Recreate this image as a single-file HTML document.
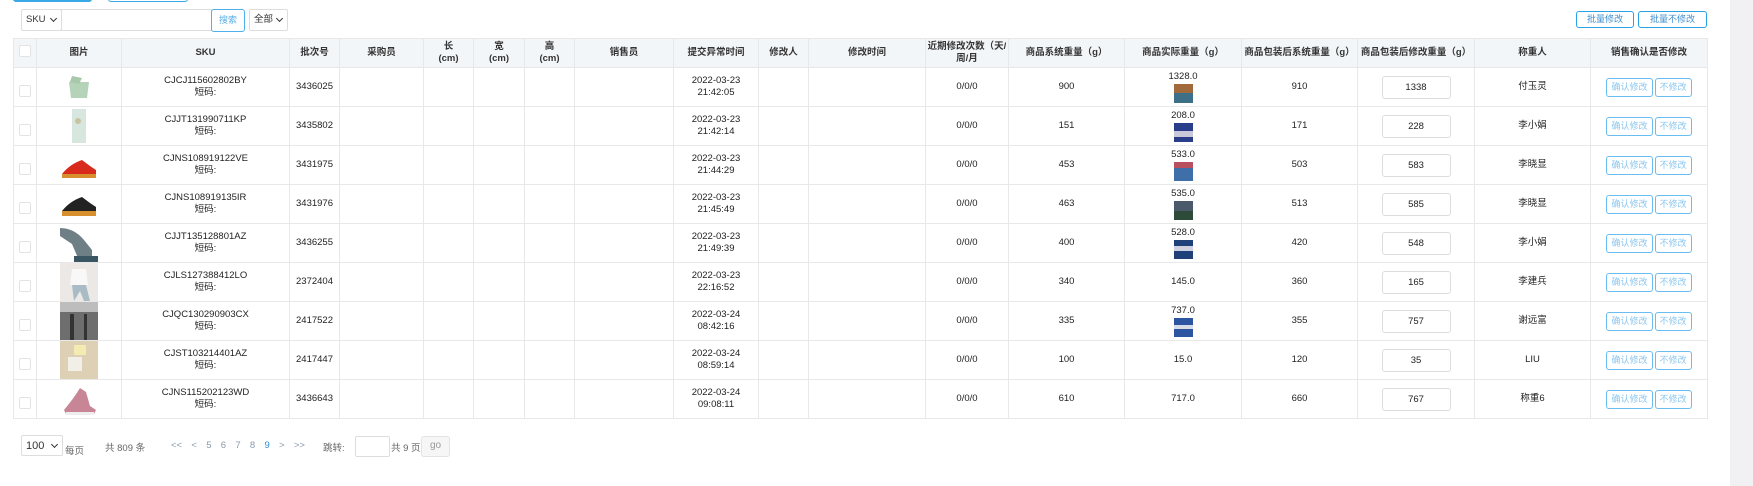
<!DOCTYPE html>
<html><head><meta charset="utf-8">
<style>
*{box-sizing:border-box;margin:0;padding:0}
body{width:1753px;height:486px;background:#fff;font-family:"Liberation Sans","Noto Sans CJK SC",sans-serif;font-size:9.5px;color:#222;position:relative;overflow:hidden}
.abs{position:absolute}
.gray{position:absolute;left:1730px;top:0;width:23px;height:486px;background:#f1f1f3}
.tb{position:absolute;top:-8px;height:10px;border:1px solid #3aa7e6;border-radius:3px}
.sel{position:absolute;border:1px solid #ddd;border-radius:2px;background:#fff;font-size:9.5px;line-height:20px;padding-left:4px;color:#333}
.sel:after{content:"";position:absolute;right:5px;top:6px;width:4px;height:4px;border-right:1.5px solid #333;border-bottom:1.5px solid #333;transform:rotate(45deg)}
.btn{position:absolute;border:1px solid #4db0ea;border-radius:3px;color:#5aaee6;font-size:9px;text-align:center;background:#fff}
table{position:absolute;left:13px;top:38px;border-collapse:collapse;table-layout:fixed;width:1695px}
th,td{border:1px solid #e8e8e8;text-align:center;vertical-align:middle;font-weight:normal}
th{background:#f3f6f9;height:29px;font-size:9.5px;line-height:12px;font-weight:bold;color:#333}
td{height:38.4px;line-height:12px;padding:0}
.cb{display:inline-block;width:12px;height:12px;border:1px solid #e3e3e3;border-radius:2px;background:#fff;margin-top:12px}
.th-cb{display:inline-block;width:12px;height:12px;border:1px solid #e3e3e3;border-radius:2px;background:#fff}
.th{display:inline-block;width:38px;height:38px;vertical-align:middle}
.mini{display:block;width:19px;height:19px;margin:1px auto 0}
.inp{display:inline-block;width:69px;height:23px;border:1px solid #ddd;border-radius:3px;line-height:21px}
.cf{display:inline-block;height:19px;line-height:17px;border:1px solid #69bdf0;border-radius:3px;color:#8cc6ee;font-size:9px;padding:0 4px;margin:0 1px}
.pg{position:absolute;top:440px;font-size:9.5px;color:#666}
</style></head><body>
<div class="gray"></div>
<div class="tb" style="left:13px;width:79px;background:#3aa7e6"></div>
<div class="tb" style="left:108px;width:80px"></div>

<div class="sel" style="left:21px;top:9px;width:41px;height:22px">SKU</div>
<div class="abs" style="left:61px;top:9px;width:151px;height:22px;border:1px solid #ddd"></div>
<div class="btn" style="left:211px;top:9px;width:34px;height:23px;line-height:21px">搜索</div>
<div class="sel" style="left:249px;top:9px;width:39px;height:22px">全部</div>

<div class="btn" style="left:1576px;top:11px;width:58px;height:17px;line-height:15px;border-color:#27a3e3;color:#3f8fd0">批量修改</div>
<div class="btn" style="left:1638px;top:11px;width:69px;height:17px;line-height:15px;border-color:#27a3e3;color:#3f8fd0">批量不修改</div>

<table>
<colgroup><col style="width:23px"><col style="width:85px"><col style="width:168px"><col style="width:50px"><col style="width:84px"><col style="width:50px"><col style="width:51px"><col style="width:50px"><col style="width:99px"><col style="width:85px"><col style="width:50px"><col style="width:117px"><col style="width:83px"><col style="width:116px"><col style="width:117px"><col style="width:116px"><col style="width:117px"><col style="width:116px"><col style="width:117px"></colgroup>
<tr><th><span class="th-cb"></span></th><th>图片</th><th>SKU</th><th>批次号</th><th>采购员</th><th>长<br>(cm)</th><th>宽<br>(cm)</th><th>高<br>(cm)</th><th>销售员</th><th>提交异常时间</th><th>修改人</th><th>修改时间</th><th>近期修改次数（天/<br>周/月</th><th>商品系统重量（g）</th><th>商品实际重量（g）</th><th>商品包装后系统重量（g）</th><th>商品包装后修改重量（g）</th><th>称重人</th><th>销售确认是否修改</th></tr>

<tr><td><span class="cb"></span></td><td><svg class="th" viewBox="0 0 38 38"><path d="M9 14h20l-2 16H11z" fill="#b5d3b8"/><path d="M12 8l10 2-3 6-9-2z" fill="#a7c9aa"/></svg></td><td>CJCJ115602802BY<br>短码:</td><td>3436025</td><td></td><td></td><td></td><td></td><td></td><td>2022-03-23<br>21:42:05</td><td></td><td></td><td>0/0/0</td><td>900</td><td>1328.0<svg class="mini" viewBox="0 0 19 19"><rect width="19" height="10" fill="#a06a3a"/><rect y="9" width="19" height="10" fill="#3d6f86"/></svg></td><td>910</td><td><span class="inp">1338</span></td><td>付玉灵</td><td><span class="cf">确认修改</span><span class="cf">不修改</span></td></tr>

<tr><td><span class="cb"></span></td><td><svg class="th" viewBox="0 0 38 38"><rect x="12" y="2" width="14" height="34" fill="#d8e6e0"/><circle cx="18" cy="14" r="3" fill="#c9c4a0"/></svg></td><td>CJJT131990711KP<br>短码:</td><td>3435802</td><td></td><td></td><td></td><td></td><td></td><td>2022-03-23<br>21:42:14</td><td></td><td></td><td>0/0/0</td><td>151</td><td>208.0<svg class="mini" viewBox="0 0 19 19"><rect width="19" height="19" fill="#2a3d8a"/><rect y="8" width="19" height="6" fill="#c8c8d8"/></svg></td><td>171</td><td><span class="inp">228</span></td><td>李小娟</td><td><span class="cf">确认修改</span><span class="cf">不修改</span></td></tr>

<tr><td><span class="cb"></span></td><td><svg class="th" viewBox="0 0 38 38"><path d="M2 28q8-10 20-14l8 6 6 4v5H2z" fill="#d92a1e"/><rect x="2" y="28" width="34" height="4" fill="#d8902e"/></svg></td><td>CJNS108919122VE<br>短码:</td><td>3431975</td><td></td><td></td><td></td><td></td><td></td><td>2022-03-23<br>21:44:29</td><td></td><td></td><td>0/0/0</td><td>453</td><td>533.0<svg class="mini" viewBox="0 0 19 19"><rect width="19" height="19" fill="#3f6fa8"/><rect width="19" height="6" fill="#b85060"/></svg></td><td>503</td><td><span class="inp">583</span></td><td>李晓显</td><td><span class="cf">确认修改</span><span class="cf">不修改</span></td></tr>

<tr><td><span class="cb"></span></td><td><svg class="th" viewBox="0 0 38 38"><path d="M2 26q8-10 20-14l8 6 6 4v5H2z" fill="#222"/><rect x="2" y="26" width="34" height="5" fill="#d8902e"/></svg></td><td>CJNS108919135IR<br>短码:</td><td>3431976</td><td></td><td></td><td></td><td></td><td></td><td>2022-03-23<br>21:45:49</td><td></td><td></td><td>0/0/0</td><td>463</td><td>535.0<svg class="mini" viewBox="0 0 19 19"><rect width="19" height="19" fill="#4a5a6a"/><rect y="10" width="19" height="9" fill="#2e4a3a"/></svg></td><td>513</td><td><span class="inp">585</span></td><td>李晓显</td><td><span class="cf">确认修改</span><span class="cf">不修改</span></td></tr>

<tr><td><span class="cb"></span></td><td><svg class="th" viewBox="0 0 38 38"><path d="M0 4q14 0 24 12l8 10v8H18l-6-14L0 12z" fill="#6f7f86"/><rect x="14" y="32" width="24" height="6" fill="#3a5662"/></svg></td><td>CJJT135128801AZ<br>短码:</td><td>3436255</td><td></td><td></td><td></td><td></td><td></td><td>2022-03-23<br>21:49:39</td><td></td><td></td><td>0/0/0</td><td>400</td><td>528.0<svg class="mini" viewBox="0 0 19 19"><rect width="19" height="19" fill="#20407a"/><rect y="6" width="19" height="5" fill="#d0d0e0"/></svg></td><td>420</td><td><span class="inp">548</span></td><td>李小娟</td><td><span class="cf">确认修改</span><span class="cf">不修改</span></td></tr>

<tr><td><span class="cb"></span></td><td><svg class="th" viewBox="0 0 38 38"><rect width="38" height="38" fill="#ece8e6"/><path d="M12 6h14l2 16H10z" fill="#f8f8f8"/><path d="M12 22h14l4 16h-6l-4-10-6 10z" fill="#a9bcc6"/></svg></td><td>CJLS127388412LO<br>短码:</td><td>2372404</td><td></td><td></td><td></td><td></td><td></td><td>2022-03-23<br>22:16:52</td><td></td><td></td><td>0/0/0</td><td>340</td><td>145.0</td><td>360</td><td><span class="inp">165</span></td><td>李建兵</td><td><span class="cf">确认修改</span><span class="cf">不修改</span></td></tr>

<tr><td><span class="cb"></span></td><td><svg class="th" viewBox="0 0 38 38"><rect width="38" height="38" fill="#6e6e6e"/><rect width="38" height="10" fill="#bdbdbd"/><rect x="10" y="12" width="4" height="26" fill="#333"/><rect x="24" y="12" width="3" height="26" fill="#333"/></svg></td><td>CJQC130290903CX<br>短码:</td><td>2417522</td><td></td><td></td><td></td><td></td><td></td><td>2022-03-24<br>08:42:16</td><td></td><td></td><td>0/0/0</td><td>335</td><td>737.0<svg class="mini" viewBox="0 0 19 19"><rect width="19" height="19" fill="#2d54a0"/><rect y="7" width="19" height="4" fill="#d8dce8"/></svg></td><td>355</td><td><span class="inp">757</span></td><td>谢远富</td><td><span class="cf">确认修改</span><span class="cf">不修改</span></td></tr>

<tr><td><span class="cb"></span></td><td><svg class="th" viewBox="0 0 38 38"><rect width="38" height="38" fill="#ddd0b4"/><rect x="8" y="16" width="14" height="14" fill="#f2efe6"/><rect x="14" y="4" width="12" height="10" fill="#f3ecb0"/></svg></td><td>CJST103214401AZ<br>短码:</td><td>2417447</td><td></td><td></td><td></td><td></td><td></td><td>2022-03-24<br>08:59:14</td><td></td><td></td><td>0/0/0</td><td>100</td><td>15.0</td><td>120</td><td><span class="inp">35</span></td><td>LIU</td><td><span class="cf">确认修改</span><span class="cf">不修改</span></td></tr>

<tr><td><span class="cb"></span></td><td><svg class="th" viewBox="0 0 38 38"><path d="M4 30q10-12 16-22l6 4 4 14 6 4-2 4H6z" fill="#c78595"/><path d="M6 32h28v3H6z" fill="#eee"/></svg></td><td>CJNS115202123WD<br>短码:</td><td>3436643</td><td></td><td></td><td></td><td></td><td></td><td>2022-03-24<br>09:08:11</td><td></td><td></td><td>0/0/0</td><td>610</td><td>717.0</td><td>660</td><td><span class="inp">767</span></td><td>称重6</td><td><span class="cf">确认修改</span><span class="cf">不修改</span></td></tr>
</table>

<div class="sel" style="left:21px;top:435px;width:42px;height:21px;font-size:11px;color:#333">100</div>
<div class="pg" style="left:65px;top:443px">每页</div>
<div class="pg" style="left:105px">共 809 条</div>
<div class="pg" style="left:171px;color:#8a9aaa;word-spacing:2px">&lt;&lt; &nbsp;&lt; &nbsp;5 &nbsp;6 &nbsp;7 &nbsp;8 &nbsp;<span style="color:#2a8fe0">9</span> &nbsp;&gt; &nbsp;&gt;&gt;</div>
<div class="pg" style="left:323px">跳转:</div>
<div class="abs" style="left:355px;top:436px;width:35px;height:21px;border:1px solid #ddd;border-radius:2px"></div>
<div class="pg" style="left:391px">共 9 页</div>
<div class="abs" style="left:421px;top:436px;width:29px;height:21px;border:1px solid #e3e3e3;border-radius:3px;background:#f6f6f6;color:#999;font-size:10px;text-align:center;line-height:18px">go</div>
</body></html>
